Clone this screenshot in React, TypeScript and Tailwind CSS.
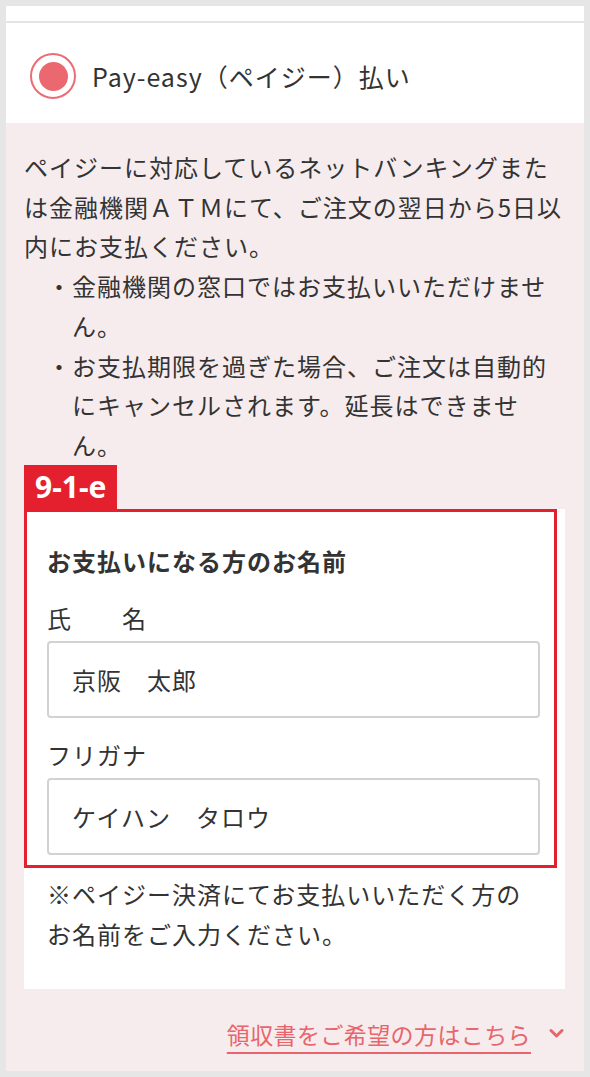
const jp = "font-['Noto_Sans_CJK_JP','Noto_Sans',sans-serif]";

function Radio() {
  return (
    <div className="flex h-[46px] w-[46px] shrink-0 items-center justify-center rounded-full border-2 border-[#ec6c73] bg-white">
      <div className="h-[29px] w-[29px] rounded-full bg-[#ec6870]" />
    </div>
  );
}

function NameField({ label, value }: { label: string; value: string }) {
  return (
    <div className="mt-[17px]">
      <div className="leading-[40px]">{label}</div>
      <input
        readOnly
        defaultValue={value}
        className="mt-[3px] block h-[77px] w-full rounded-[4px] border-2 border-[#d2d2d2] bg-white pl-[23px] text-[#333] outline-none"
      />
    </div>
  );
}

export default function App() {
  return (
    <div className={`${jp} h-[1077px] bg-[#e6e6e6] px-[6px] pt-[6px] text-[24px] tracking-[1px] text-[#333]`}>
      <div className="h-[15px] bg-white" />
      <div className="h-[2px] bg-[#e4e4e4]" />

      <div className="flex h-[100px] items-center gap-[16px] bg-white pl-[24px] pt-[6px]">
        <Radio />
        <span className="text-[25px] leading-[40px]">Pay-easy（ペイジー）払い</span>
      </div>

      <div className="bg-[#f6eced] pb-[17px] pl-[18px] pr-[18px] pt-[24px]">
        <div className="leading-[39.7px]">
          <p>ペイジーに対応しているネットバンキングまたは金融機関ＡＴＭにて、ご注文の翌日から5日以内にお支払ください。</p>
          <ul>
            <li className="flex pl-[23px]">
              <span className="w-[25px] shrink-0">・</span>
              <span>金融機関の窓口ではお支払いいただけません。</span>
            </li>
            <li className="flex pl-[23px]">
              <span className="w-[25px] shrink-0">・</span>
              <span>お支払期限を過ぎた場合、ご注文は自動的にキャンセルされます。延長はできません。</span>
            </li>
          </ul>
        </div>

        <div className="flex h-[44px] w-fit items-center bg-[#e5202e] px-[11px] font-['Noto_Sans',sans-serif] text-[30px] font-bold tracking-normal text-white">
          9-1-e
        </div>

        <div className="relative mr-px bg-white pb-[35px] pl-[23px] pr-[25px] pt-[32px]">
          <div className="pointer-events-none absolute left-0 top-0 h-[359px] w-[533px] border-[3px] border-[#e5202e]" />
          <h3 className="font-bold leading-[40px]">お支払いになる方のお名前</h3>
          <NameField label="氏　　名" value="京阪　太郎" />
          <NameField label="フリガナ" value="ケイハン　タロウ" />
          <p className="mt-[19px] leading-[40px]">※ペイジー決済にてお支払いいただく方のお名前をご入力ください。</p>
        </div>

        <div className="mr-[2px] mt-[25px] flex items-center justify-end gap-[18px]">
          <a className="text-[23px] leading-[40px] tracking-[0.4px] text-[#e9646c] underline decoration-2 underline-offset-[8px]">
            領収書をご希望の方はこちら
          </a>
          <svg width="15" height="11" viewBox="0 0 15 11" fill="none">
            <polyline points="2,2.5 7.5,8 13,2.5" stroke="#e9646c" strokeWidth="3" strokeLinecap="round" strokeLinejoin="round" />
          </svg>
        </div>
      </div>
    </div>
  );
}
